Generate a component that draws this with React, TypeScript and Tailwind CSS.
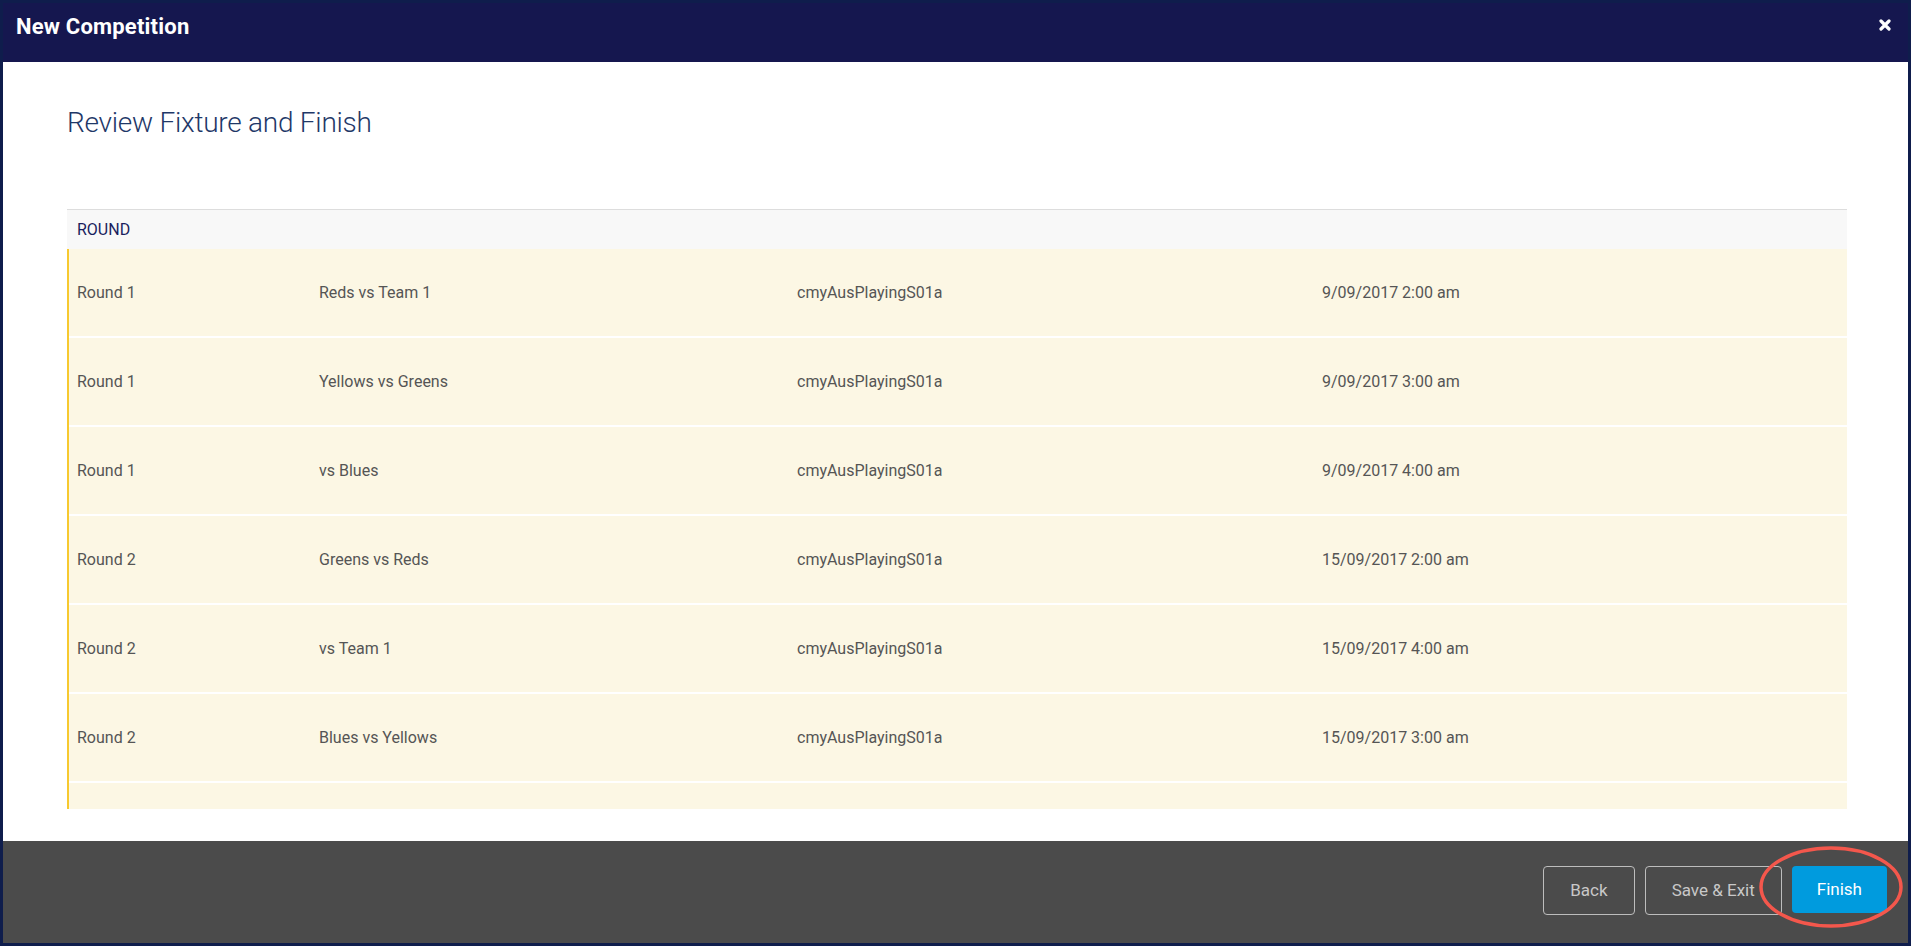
import React from 'react';

type Fixture = {
  round: string;
  match: string;
  venue: string;
  time: string;
};

const fixtures: Fixture[] = [
  { round: 'Round 1', match: 'Reds vs Team 1', venue: 'cmyAusPlayingS01a', time: '9/09/2017 2:00 am' },
  { round: 'Round 1', match: 'Yellows vs Greens', venue: 'cmyAusPlayingS01a', time: '9/09/2017 3:00 am' },
  { round: 'Round 1', match: 'vs Blues', venue: 'cmyAusPlayingS01a', time: '9/09/2017 4:00 am' },
  { round: 'Round 2', match: 'Greens vs Reds', venue: 'cmyAusPlayingS01a', time: '15/09/2017 2:00 am' },
  { round: 'Round 2', match: 'vs Team 1', venue: 'cmyAusPlayingS01a', time: '15/09/2017 4:00 am' },
  { round: 'Round 2', match: 'Blues vs Yellows', venue: 'cmyAusPlayingS01a', time: '15/09/2017 3:00 am' },
  // next row is scrolled out of view, only its top edge shows
  { round: '', match: '', venue: '', time: '' },
];

function CloseIcon() {
  return (
    <svg width="12" height="12" viewBox="0 0 12 12" aria-hidden="true">
      <path d="M2 2 L10 10 M10 2 L2 10" stroke="#ffffff" strokeWidth="3.2" strokeLinecap="round" />
    </svg>
  );
}

function FixtureRow({ f }: { f: Fixture }) {
  return (
    <div className="grid h-[89px] shrink-0 grid-cols-[242px_478px_525px_1fr] items-center border-b-2 border-white bg-[#fcf7e4] pl-2 text-[16px] text-[#555555]">
      <span>{f.round}</span>
      <span>{f.match}</span>
      <span>{f.venue}</span>
      <span>{f.time}</span>
    </div>
  );
}

export default function App() {
  return (
    <div className="h-[946px] w-full bg-[#0f1d4c] p-[3px] font-['Roboto','Liberation_Sans',sans-serif]">
      <div className="flex h-full flex-col">
        <header className="flex h-[59px] shrink-0 items-start justify-between bg-[#15174f] pl-[13px] pr-[17px] pt-[11px]">
          <h1 className="text-[22px] font-bold leading-[26px] tracking-[0.2px] text-white">New Competition</h1>
          <button className="mt-[5px] flex h-[12px] w-[12px] items-center justify-center">
            <CloseIcon />
          </button>
        </header>

        <main className="flex-1 bg-white pl-[64px] pr-[61px] pt-[45px]">
          <h2 className="text-[28px] font-light leading-[32px] tracking-[-0.25px] text-[#1f3868]">
            Review Fixture and Finish
          </h2>

          <div className="mt-[70px]">
            <div className="flex h-[40px] items-center border-t border-[#dddddd] bg-[#f8f8f8] pl-[10px] text-[16px] uppercase text-[#1b1f5e]">
              Round
            </div>
            <div className="flex h-[560px] flex-col overflow-hidden border-l-2 border-[#f7c92f]">
              {fixtures.map((f, i) => (
                <FixtureRow key={i} f={f} />
              ))}
            </div>
          </div>
        </main>

        <footer className="relative flex h-[102px] shrink-0 items-start justify-end gap-[10px] bg-[#4b4b4b] pr-[21px] pt-[25px]">
          <button className="h-[49px] rounded-[4px] border border-[#bdbdbd] px-[26px] text-[17px] text-[#c8c8c8]">
            Back
          </button>
          <button className="h-[49px] rounded-[4px] border border-[#bdbdbd] px-[26px] text-[17px] text-[#c8c8c8]">
            Save &amp; Exit
          </button>
          <button className="h-[47px] rounded-[4px] bg-[#009bde] px-[25px] text-[17px] text-white">Finish</button>

          <svg
            className="pointer-events-none absolute right-[5px] top-[5px] h-[82px] w-[144px]"
            viewBox="0 0 144 82"
            aria-hidden="true"
          >
            <ellipse cx="72" cy="41" rx="70" ry="39" fill="none" stroke="#f4574c" strokeWidth="3.5" />
          </svg>
        </footer>
      </div>
    </div>
  );
}
